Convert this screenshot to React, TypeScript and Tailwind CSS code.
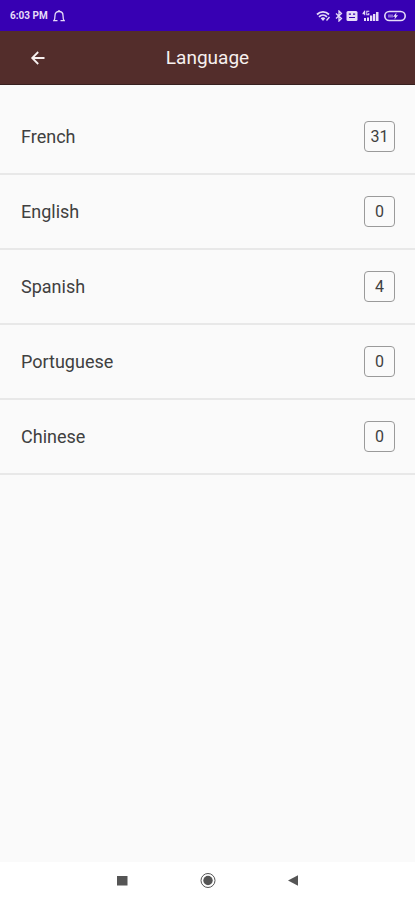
type Language = {
  name: string;
  count: number;
};

const languages: Language[] = [
  { name: 'French', count: 31 },
  { name: 'English', count: 0 },
  { name: 'Spanish', count: 4 },
  { name: 'Portuguese', count: 0 },
  { name: 'Chinese', count: 0 },
];

const StatusBar = () => (
  <div className="flex h-[31px] shrink-0 items-center justify-between bg-[#3700b3] pl-[10px] pr-2 text-[#e6dcf8]">
    <div className="flex items-center gap-1">
      <span className="text-[10px] font-bold leading-4">6:03 PM</span>
      <svg className="ml-px" width="12" height="12" viewBox="0 0 12 12" fill="none" stroke="currentColor" strokeWidth="1.3" aria-hidden="true">
        <path d="M4.500 10.700H0.800C2 9.500 2 8.500 2 5.500C2 3 3.700 1.500 6 1.500S10 3 10 5.500C10 8.500 10 9.500 11.200 10.700H7.500" />
        <path d="M6 0V1.500" />
      </svg>
    </div>
    <div className="flex items-center">
      {/* Wifi */}
      <svg width="15" height="12" viewBox="0 0 15 12" fill="none" stroke="currentColor" aria-hidden="true">
        <path d="M1 4.500C4.500 1 9.500 1 13 4.500" strokeWidth="1.800" />
        <path d="M3 6.800C5.300 4.600 8.700 4.600 11 6.800" strokeWidth="1.700" />
        <path d="M4.700 8.200C6 7 8 7 9.300 8.200L7 11Z" fill="currentColor" stroke="none" />
        <path d="M10.500 10.500L13.500 7" strokeWidth="1.300" />
      </svg>
      {/* Bluetooth */}
      <svg className="ml-1" width="8" height="12" viewBox="0 0 8 12" fill="none" stroke="currentColor" strokeWidth="1.300" aria-hidden="true">
        <path d="M1 3.500L6.500 8.500L4 11V1L6.500 3.500L1 8.500" />
      </svg>
      {/* Volte badge */}
      <svg className="ml-[3px]" width="12" height="12" viewBox="0 0 12 12" aria-hidden="true">
        <rect x="0.500" y="1" width="11" height="10" rx="1.500" fill="currentColor" />
        <path d="M2.800 4.200H5M7 4.200H9.200M3 7.500H9" stroke="#3700b3" strokeWidth="1.200" />
      </svg>
      {/* Signal */}
      <svg className="ml-1" width="18" height="12" viewBox="0 0 18 12" fill="currentColor" aria-hidden="true">
        <path d="M2.500 0.500L0.500 3.300V4.200H2.200V5.200H3.200V0.500ZM4.300 0.800H7.300V1.800H5.300V4.200H6.300V3H7.300V5.200H4.300Z" />
        <rect x="2" y="8" width="2" height="3" />
        <rect x="5" y="7.500" width="2" height="3.500" />
        <rect x="8" y="5.500" width="2.300" height="5.500" />
        <rect x="11" y="4" width="2.300" height="7" />
        <rect x="14" y="2" width="2.500" height="9" />
      </svg>
      {/* Battery */}
      <svg className="ml-1" width="23" height="12" viewBox="0 0 23 12" aria-hidden="true">
        <rect x="0.800" y="1.500" width="20.400" height="9" rx="4.500" fill="none" stroke="currentColor" strokeWidth="1.600" />
        <path d="M4 4.500H9V7.500H4Z" fill="currentColor" opacity="0.450" />
        <path d="M12.500 2.500L9 6.700H11L10.500 9.500L14 5.300H12Z" fill="currentColor" />
      </svg>
    </div>
  </div>
);

const Header = () => (
  <header className="grid h-[54px] shrink-0 grid-cols-[1fr_auto_1fr] items-center border-b border-[#37201f] bg-[#532d2b] text-[#f7f0ef]">
    <button type="button" aria-label="Back" className="ml-[30px] flex size-4 cursor-pointer items-center justify-center">
      <svg width="16" height="16" viewBox="0 0 16 16" fill="none" stroke="currentColor" strokeWidth="1.800" aria-hidden="true">
        <path d="M14.500 8H2.500M8.200 2L2.200 8L8.200 14" />
      </svg>
    </button>
    <h1 className="pt-px text-[19px] leading-6">Language</h1>
  </header>
);

const LanguageRow = ({ name, count }: Language) => (
  <li className="flex h-[75px] items-center justify-between border-b-2 border-[#e8e8e8] pl-[21px] pr-5">
    <span className="text-lg leading-6">{name}</span>
    <span className="flex size-[31px] items-center justify-center rounded border border-[#9a9a9a] text-base leading-5">
      {count}
    </span>
  </li>
);

const NavigationBar = () => (
  <nav className="flex h-[38px] shrink-0 items-center justify-center gap-[70px] bg-white text-[#555555]">
    <button type="button" aria-label="Recent apps" className="cursor-pointer">
      <svg width="16" height="16" viewBox="0 0 16 16" aria-hidden="true">
        <rect x="3" y="3" width="10.500" height="9.500" fill="currentColor" />
      </svg>
    </button>
    <button type="button" aria-label="Home" className="cursor-pointer">
      <svg width="16" height="16" viewBox="0 0 16 16" aria-hidden="true">
        <circle cx="8" cy="7.500" r="7" fill="none" stroke="currentColor" strokeWidth="1" />
        <circle cx="8" cy="7.500" r="4.700" fill="currentColor" />
      </svg>
    </button>
    <button type="button" aria-label="Back" className="cursor-pointer">
      <svg width="16" height="16" viewBox="0 0 16 16" aria-hidden="true">
        <path d="M2 7.500L12 2.300V12.700Z" fill="currentColor" />
      </svg>
    </button>
  </nav>
);

const App = () => {
  return (
    <div className="flex min-h-screen flex-col bg-[#fafafa] font-['Roboto',sans-serif] text-[#404040]">
      <StatusBar />
      <Header />
      <main className="flex-1 pt-[15px]">
        <ul>
          {languages.map(language => (
            <LanguageRow key={language.name} {...language} />
          ))}
        </ul>
      </main>
      <NavigationBar />
    </div>
  );
};

export default App;
